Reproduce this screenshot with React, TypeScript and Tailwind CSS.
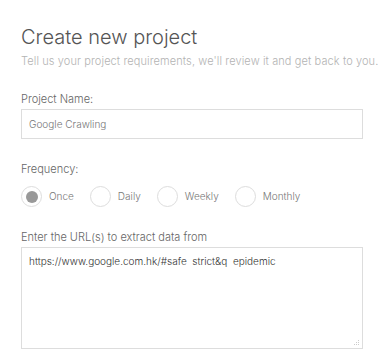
import {useState} from 'react';

const options = ['Once', 'Daily', 'Weekly', 'Monthly'];

const App: React.FC = () => {
    const [name, setName] = useState<string>('Google Crawling');
    const [frequency, setFrequency] = useState<string>('Once');
    const [urls, setUrls] = useState<string>('https://www.google.com.hk/#safe\u00a0 strict&q\u00a0 epidemic');

    return (
        <div className="w-[384px] h-[360px] bg-white px-[21px] pt-[24px] font-['Inter',sans-serif] font-light overflow-hidden">
            <h1 className="text-[20px] leading-[26px] text-[#555]">Create new project</h1>
            <p className="mt-[4px] text-[11px] leading-[14px] text-[#b3b3b3] whitespace-nowrap tracking-[0.1px]">
                Tell us your project requirements, we'll review it and get back to you.
            </p>

            <label className="block mt-[24px] text-[11px] leading-[14px] text-[#666]">Project Name:</label>
            <input
                type="text"
                value={name}
                onChange={(e) => setName(e.target.value)}
                className="block mt-[3px] w-full h-[30px] border border-[#ddd] px-[7px] text-[10px] text-[#777] outline-none"
            />

            <label className="block mt-[23px] text-[11px] leading-[14px] text-[#666]">Frequency:</label>
            <div className="flex items-center mt-[10px]">
                {options.map(option => (
                    <button
                        key={option}
                        type="button"
                        onClick={() => setFrequency(option)}
                        className="flex items-center mr-[16px]"
                    >
                        <span className="w-[21px] h-[21px] rounded-full border border-[#ddd] flex items-center justify-center">
                            {frequency === option && <span className="w-[12px] h-[12px] rounded-full bg-[#999]"/>}
                        </span>
                        <span className="ml-[7px] text-[10px] text-[#777]">{option}</span>
                    </button>
                ))}
            </div>

            <label className="block mt-[23px] text-[11px] leading-[14px] text-[#666]">Enter the URL(s) to extract data from</label>
            <div className="relative mt-[3px]">
                <textarea
                    value={urls}
                    onChange={(e) => setUrls(e.target.value)}
                    className="block w-full h-[102px] border border-[#ddd] px-[7px] py-[6px] text-[10px] text-[#333] outline-none resize-none"
                />
                <svg className="absolute right-[3px] bottom-[3px]" width="7" height="7" viewBox="0 0 7 7">
                    <rect x="5" y="1" width="1" height="1" fill="#ccc"/>
                    <rect x="3" y="3" width="1" height="1" fill="#ccc"/>
                    <rect x="5" y="3" width="1" height="1" fill="#ccc"/>
                    <rect x="1" y="5" width="1" height="1" fill="#ccc"/>
                    <rect x="3" y="5" width="1" height="1" fill="#ccc"/>
                    <rect x="5" y="5" width="1" height="1" fill="#ccc"/>
                </svg>
            </div>
        </div>
    );
};

export default App;
